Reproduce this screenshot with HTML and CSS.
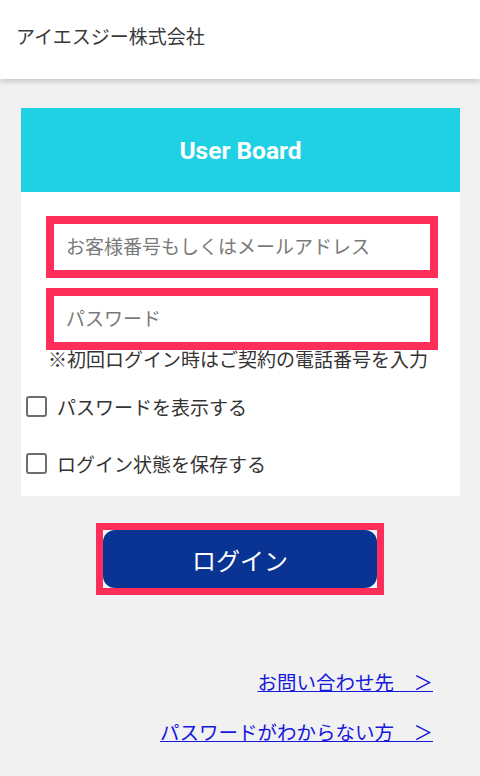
FILE: index.html
```html
<!DOCTYPE html>
<html lang="ja">
<head>
    <meta charset="UTF-8">
    <meta name="viewport" content="width=device-width, initial-scale=1.0">
    <title>User Board ログイン</title>
    <link rel="stylesheet" href="styles.css">
</head>
<body>
    <header class="site-header">アイエスジー株式会社</header>

    <main class="page">
        <div class="board">
            <div class="board-title">User Board</div>
            <form class="board-body">
                <input class="field" type="text" placeholder="お客様番号もしくはメールアドレス">
                <input class="field" type="password" placeholder="パスワード">
                <p class="note">※初回ログイン時はご契約の電話番号を入力</p>
                <label class="check-row"><input type="checkbox" class="check"> パスワードを表示する</label>
                <label class="check-row"><input type="checkbox" class="check"> ログイン状態を保存する</label>
            </form>
        </div>

        <div class="login-frame">
            <button class="login-btn" type="button">ログイン</button>
        </div>

        <nav class="links">
            <a href="#">お問い合わせ先　＞</a>
            <a href="#">パスワードがわからない方　＞</a>
        </nav>
    </main>
</body>
</html>
```

FILE: styles.css
```css
body {
    margin: 0;
    background-color: #f1f1f1;
    font-family: Roboto, "Noto Sans CJK JP", sans-serif;
    color: #333;
}

.site-header {
    height: 79px;
    background-color: #fff;
    box-shadow: 0 2px 6px rgba(0, 0, 0, 0.2);
    display: flex;
    align-items: center;
    padding-left: 16px;
    padding-bottom: 9px;
    box-sizing: border-box;
    font-size: 19px;
    color: #3a3a3a;
}

.page {
    padding: 29px 20px 0 21px;
}

.board-title {
    height: 84px;
    background-color: #1fd1e3;
    color: #fff;
    font-weight: bold;
    font-size: 24.5px;
    display: flex;
    align-items: center;
    justify-content: center;
}

.board-body {
    background-color: #fff;
    padding: 24px 0 4px;
    display: flex;
    flex-direction: column;
}

.field {
    margin: 0 22px 10px 25px;
    height: 62px;
    box-sizing: border-box;
    border: 8px solid #fd2f5a;
    padding: 0 12px;
    font-family: inherit;
    font-size: 19px;
    outline: none;
}

.field::placeholder {
    color: #7a7a7a;
}

.note {
    margin: -10px 0 0 27px;
    font-size: 19px;
    line-height: 22px;
    color: #333;
}

.check-row {
    display: flex;
    align-items: center;
    height: 57px;
    padding-left: 5px;
    font-size: 19px;
    color: #333;
}

.check-row:first-of-type {
    margin-top: 6px;
}

.check {
    appearance: none;
    width: 21px;
    height: 21px;
    margin: 0 10px 0 0;
    border: 2px solid #6e6e6e;
    border-radius: 3px;
    background-color: #fff;
}

.login-frame {
    width: 288px;
    margin: 27px 0 0 75px;
    border: 7px solid #fd2f5a;
    box-sizing: border-box;
    background-color: #f7f7f7;
    display: flex;
}

.login-btn {
    flex: 1;
    height: 58px;
    border: none;
    border-radius: 12px;
    background-color: #0a3494;
    color: #fff;
    font-family: inherit;
    font-size: 24px;
}

.links {
    display: flex;
    flex-direction: column;
    align-items: flex-end;
    gap: 26px;
    margin: 77px 27px 0 0;
}

.links a {
    color: #1717dd;
    font-size: 19.5px;
    line-height: 24px;
}
```
